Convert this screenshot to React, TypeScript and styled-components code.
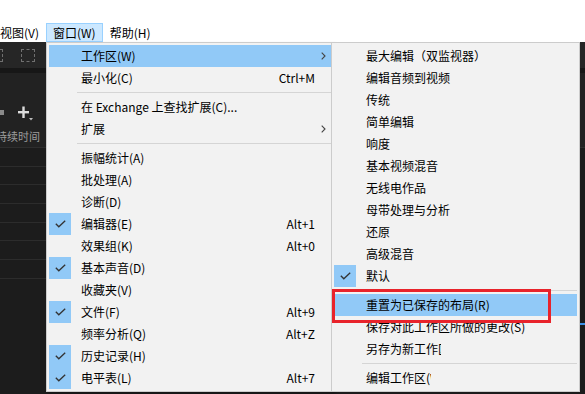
import React from 'react';
import styled, { createGlobalStyle } from 'styled-components';

interface MenuEntry {
  label?: string;
  shortcut?: string;
  checked?: boolean;
  arrow?: boolean;
  active?: boolean;
  clip?: number;
  separator?: boolean;
}

const WindowMenu: MenuEntry[] = [
  { label: '工作区(W)', arrow: true, active: true },
  { label: '最小化(C)', shortcut: 'Ctrl+M' },
  { separator: true },
  { label: '在 Exchange 上查找扩展(C)...' },
  { label: '扩展', arrow: true },
  { separator: true },
  { label: '振幅统计(A)' },
  { label: '批处理(A)' },
  { label: '诊断(D)' },
  { label: '编辑器(E)', checked: true, shortcut: 'Alt+1' },
  { label: '效果组(K)', shortcut: 'Alt+0' },
  { label: '基本声音(D)', checked: true },
  { label: '收藏夹(V)' },
  { label: '文件(F)', checked: true, shortcut: 'Alt+9' },
  { label: '频率分析(Q)', shortcut: 'Alt+Z' },
  { label: '历史记录(H)', checked: true },
  { label: '电平表(L)', checked: true, shortcut: 'Alt+7' },
];

const WorkspaceMenu: MenuEntry[] = [
  { label: '最大编辑（双监视器）' },
  { label: '编辑音频到视频' },
  { label: '传统' },
  { label: '简单编辑' },
  { label: '响度' },
  { label: '基本视频混音' },
  { label: '无线电作品' },
  { label: '母带处理与分析' },
  { label: '还原' },
  { label: '高级混音' },
  { label: '默认', checked: true },
  { separator: true },
  { label: '重置为已保存的布局(R)', active: true },
  { label: '保存对此工作区所做的更改(S)' },
  { label: '另存为新工作区...', clip: 75 },
  { separator: true },
  { label: '编辑工作区(W)...', clip: 65 },
];

const GlobalStyle = createGlobalStyle`
  body {
    margin: 0;
    background: #ffffff;
    font-family: "Noto Sans CJK SC", "Noto Sans", sans-serif;
    font-size: 12px;
    color: #000;
  }
`;

const CheckMark = () => (
  <svg width="11" height="8" viewBox="0 0 11 8">
    <polyline points="0.8,3.8 3.8,6.8 10.2,0.8" fill="none" stroke="#333" strokeWidth="1.3" />
  </svg>
);

const Chevron = () => (
  <svg width="5" height="8" viewBox="0 0 5 8">
    <polyline points="0.7,0.7 4,4 0.7,7.3" fill="none" stroke="#444" strokeWidth="1.1" />
  </svg>
);

const MenuRows: React.FC<{ entries: MenuEntry[]; sub?: React.ReactNode }> = ({ entries, sub }) => (
  <>
    {entries.map((entry, i) =>
      entry.separator ? (
        <Separator key={i} />
      ) : (
        <Row key={i} $active={entry.active}>
          <Check $on={entry.checked}>{entry.checked && <CheckMark />}</Check>
          <Label $clip={entry.clip}>{entry.label}</Label>
          <Shortcut>{entry.shortcut}</Shortcut>
          <Arrow>{entry.arrow && <Chevron />}</Arrow>
          {entry.arrow && entry.active && sub}
        </Row>
      ),
    )}
  </>
);

const App: React.FC = () => (
  <Screen>
    <GlobalStyle />
    <TitleBar />
    <MenuBar>
      <MenuTitle>视图(V)</MenuTitle>
      <MenuSlot>
        <MenuTitle $open>窗口(W)</MenuTitle>
        <Dropdown>
          <MenuRows
            entries={WindowMenu}
            sub={
              <SubMenu>
                <MenuRows entries={WorkspaceMenu} />
                <Annotation />
              </SubMenu>
            }
          />
        </Dropdown>
      </MenuSlot>
      <MenuTitle>帮助(H)</MenuTitle>
    </MenuBar>
    <Workspace>
      <LeftPanel>
        <PanelToolbar>
          <DashedIcon />
          <DashedIcon />
        </PanelToolbar>
        <PanelGap />
        <PanelHead>
          <IconRow>
            <SmallSquare />
            <AddButton>
              <svg width="16" height="16" viewBox="0 0 16 16">
                <rect x="0" y="5" width="11" height="2.4" fill="#dcdcdc" />
                <rect x="4.3" y="0.5" width="2.4" height="11.5" fill="#dcdcdc" />
                <polygon points="11,12 15,12 13,14.5" fill="#bdbdbd" />
              </svg>
            </AddButton>
          </IconRow>
          <ColumnHeader>持续时间</ColumnHeader>
        </PanelHead>
        {Array.from({ length: 7 }).map((_, i) => (
          <ListRow key={i} />
        ))}
      </LeftPanel>
      <RightPanel>
        <PanelToolbar />
        <PanelGap />
        <RightBlock />
        <Playhead />
      </RightPanel>
    </Workspace>
  </Screen>
);

const Screen = styled.div`
  width: 585px;
  height: 394px;
  overflow: hidden;
  display: flex;
  flex-direction: column;
  background: #fff;
`;

const TitleBar = styled.div`
  height: 23px;
  background: #fff;
`;

const MenuBar = styled.div`
  height: 19px;
  display: flex;
  margin-left: -7px;
  position: relative;
  z-index: 5;
`;

const MenuSlot = styled.div`
  position: relative;
  display: flex;
`;

const MenuTitle = styled.div<{ $open?: boolean }>`
  box-sizing: border-box;
  height: 19px;
  padding: 0 6px;
  line-height: 17px;
  white-space: nowrap;
  border: 1px solid ${p => (p.$open ? '#99d1ff' : 'transparent')};
  background: ${p => (p.$open ? '#cce8ff' : 'transparent')};
`;

const Dropdown = styled.div`
  position: absolute;
  top: 100%;
  left: 0;
  box-sizing: border-box;
  width: 288px;
  padding: 2px;
  background: #f2f2f2;
  border: 1px solid #cccccc;
  box-shadow: 2px 2px 3px rgba(0, 0, 0, 0.25);
`;

const SubMenu = styled.div`
  position: absolute;
  left: 100%;
  top: -3px;
  box-sizing: border-box;
  width: 249px;
  padding: 2px;
  background: #f2f2f2;
  border: 1px solid #cccccc;
  z-index: 2;
`;

const Annotation = styled.div`
  position: absolute;
  left: 0;
  top: 246px;
  width: 219px;
  height: 34px;
  box-sizing: border-box;
  border: 3px solid #e8232b;
  pointer-events: none;
`;

const Row = styled.div<{ $active?: boolean }>`
  position: relative;
  display: grid;
  grid-template-columns: 22px 1fr auto 16px;
  align-items: center;
  height: 22px;
  line-height: 22px;
  white-space: nowrap;
  background: ${p => (p.$active ? '#91c9f7' : 'transparent')};
`;

const Check = styled.div<{ $on?: boolean }>`
  width: 22px;
  height: 22px;
  display: flex;
  align-items: center;
  justify-content: center;
  background: ${p => (p.$on ? '#91c9f7' : 'transparent')};
`;

const Label = styled.div<{ $clip?: number }>`
  padding-left: 10px;
  overflow: hidden;
  max-width: ${p => (p.$clip ? `${p.$clip}px` : 'none')};
`;

const Shortcut = styled.div`
  text-align: right;
`;

const Arrow = styled.div`
  display: flex;
  align-items: center;
  justify-content: center;
  padding-left: 1px;
`;

const Separator = styled.div`
  height: 7px;
  margin-left: 28px;
  display: flex;
  align-items: center;
  &::after {
    content: '';
    flex: 1;
    height: 1px;
    background: #d5d5d5;
  }
`;

const Workspace = styled.div`
  flex: 1;
  display: flex;
  background: #1c1c1c;
`;

const LeftPanel = styled.div`
  width: 330px;
  display: flex;
  flex-direction: column;
  background: #1c1c1c;
`;

const PanelToolbar = styled.div`
  height: 26px;
  display: flex;
  align-items: center;
  gap: 18px;
  margin-left: -11px;
  background: #262626;
`;

const DashedIcon = styled.div`
  width: 14px;
  height: 13px;
  box-sizing: border-box;
  border: 1px dashed #707070;
`;

const PanelGap = styled.div`
  height: 5px;
  background: #171717;
`;

const PanelHead = styled.div`
  background: #222222;
  border-bottom: 1px solid #2e2e2e;
`;

const IconRow = styled.div`
  height: 18px;
  padding-top: 30px;
  display: flex;
  align-items: center;
  gap: 14px;
`;

const SmallSquare = styled.div`
  width: 4px;
  height: 5px;
  background: #8a8a8a;
`;

const AddButton = styled.div`
  display: flex;
  margin-top: 3px;
`;

const ColumnHeader = styled.div`
  height: 26px;
  box-sizing: border-box;
  padding-top: 4px;
  display: flex;
  align-items: center;
  margin-left: -4px;
  font-size: 11px;
  color: #9d9d9d;
  white-space: nowrap;
`;

const ListRow = styled.div`
  height: 18.67px;
  box-sizing: border-box;
  border-bottom: 1px solid #2c2c2c;
`;

const RightPanel = styled.div`
  flex: 1;
  display: flex;
  flex-direction: column;
  background: #1b1b1b;
`;

const RightBlock = styled.div`
  height: 74px;
  background: #222;
  border-bottom: 1px solid #2e2e2e;
`;

const Playhead = styled.div`
  margin-top: 175px;
  height: 2px;
  background: #3a8ee6;
`;

export default App;
